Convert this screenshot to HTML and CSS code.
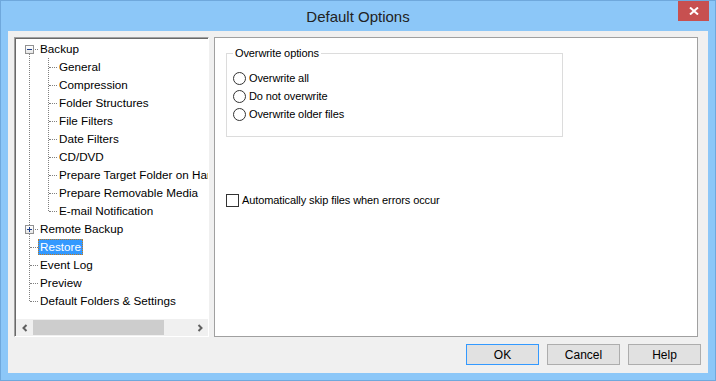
FILE: index.html
```html
<!DOCTYPE html>
<html lang="en">
<head>
  <meta charset="UTF-8">
  <title>Default Options</title>
  <link rel="stylesheet" href="styles.css">
</head>
<body>
  <div class="window">
    <!-- title bar -->
    <div class="titlebar">
      <span class="title">Default Options</span>
      <span class="close">
        <svg width="10" height="8" viewBox="0 0 10 8"><path d="M1 0.5 L9 7.5 M9 0.5 L1 7.5" stroke="#fff" stroke-width="2"/></svg>
      </span>
    </div>

    <div class="client">
      <div class="content">
        <!-- left tree -->
        <div class="treebox">
          <div class="treearea">
            <ul class="tree">
              <li>
                <div class="row has-box">
                  <span class="box"><svg width="9" height="9" viewBox="0 0 9 9"><path d="M2 4.5 H7" stroke="#1c3e8c" stroke-width="1"/></svg></span>
                  <span class="label">Backup</span>
                </div>
                <ul class="sub">
                  <li><div class="row"><span class="label">General</span></div></li>
                  <li><div class="row"><span class="label">Compression</span></div></li>
                  <li><div class="row"><span class="label">Folder Structures</span></div></li>
                  <li><div class="row"><span class="label">File Filters</span></div></li>
                  <li><div class="row"><span class="label">Date Filters</span></div></li>
                  <li><div class="row"><span class="label">CD/DVD</span></div></li>
                  <li><div class="row"><span class="label">Prepare Target Folder on Hard Drive</span></div></li>
                  <li><div class="row"><span class="label">Prepare Removable Media</span></div></li>
                  <li><div class="row"><span class="label">E-mail Notification</span></div></li>
                </ul>
              </li>
              <li>
                <div class="row has-box">
                  <span class="box"><svg width="9" height="9" viewBox="0 0 9 9"><path d="M2 4.5 H7 M4.5 2 V7" stroke="#1c3e8c" stroke-width="1"/></svg></span>
                  <span class="label">Remote Backup</span>
                </div>
              </li>
              <li><div class="row"><span class="label selected">Restore</span></div></li>
              <li><div class="row"><span class="label">Event Log</span></div></li>
              <li><div class="row"><span class="label">Preview</span></div></li>
              <li><div class="row"><span class="label">Default Folders &amp; Settings</span></div></li>
            </ul>
          </div>
          <div class="hscroll">
            <span class="arrow">
              <svg width="8" height="8" viewBox="0 0 8 8"><path d="M5.5 1 L2.5 4 L5.5 7" fill="none" stroke="#606060" stroke-width="2"/></svg>
            </span>
            <div class="track"><div class="thumb"></div></div>
            <span class="arrow">
              <svg width="8" height="8" viewBox="0 0 8 8"><path d="M2.5 1 L5.5 4 L2.5 7" fill="none" stroke="#606060" stroke-width="2"/></svg>
            </span>
          </div>
        </div>

        <!-- right panel -->
        <div class="panel">
          <fieldset class="group">
            <legend>Overwrite options</legend>
            <div class="radio-row"><span class="radio"></span>Overwrite all</div>
            <div class="radio-row"><span class="radio"></span>Do not overwrite</div>
            <div class="radio-row"><span class="radio"></span>Overwrite older files</div>
          </fieldset>
          <div class="check-row"><span class="checkbox"></span>Automatically skip files when errors occur</div>
        </div>
      </div>

      <div class="buttons">
        <button class="btn default">OK</button>
        <button class="btn">Cancel</button>
        <button class="btn">Help</button>
      </div>
    </div>
  </div>
</body>
</html>
```

FILE: styles.css
```css
* {
  box-sizing: border-box;
}
body {
  margin: 0;
  font-family: "Liberation Sans", Arial, sans-serif;
  font-size: 12px;
  color: #000;
}
.window {
  width: 716px;
  height: 381px;
  background: #8cc7f8;
  border: 1px solid #6fa8dc;
  padding: 0 7px 7px 7px;
  display: flex;
  flex-direction: column;
  position: relative;
}
.titlebar {
  height: 30px;
  display: flex;
  align-items: center;
  justify-content: center;
}
.title {
  font-size: 15px;
  color: #222;
  padding-top: 1px;
}
.close {
  position: absolute;
  top: 0;
  right: 6px;
  width: 31px;
  height: 20px;
  background: #c75050;
  display: flex;
  align-items: center;
  justify-content: center;
}
.client {
  flex: 1;
  background: #f0f0f0;
  padding: 6px 7px 8px 6px;
  display: flex;
  flex-direction: column;
}
.content {
  display: flex;
  gap: 5px;
  height: 300px;
}

/* tree */
.treebox {
  width: 195px;
  border-top: 1px solid #a0a0a0;
  border-left: 1px solid #a0a0a0;
  border-right: 1px solid #fff;
  border-bottom: 1px solid #fff;
  display: flex;
  flex-direction: column;
}
.treearea {
  flex: 1;
  background: #fff;
  border-top: 1px solid #696969;
  border-left: 1px solid #696969;
  overflow: hidden;
  padding-top: 1px;
}
.tree, .sub {
  list-style: none;
  margin: 0;
  padding: 0;
  position: relative;
}
.tree::before {
  content: "";
  position: absolute;
  left: 13px;
  top: 9px;
  bottom: 9px;
  border-left: 1px dotted #808080;
}
.sub::before {
  content: "";
  position: absolute;
  left: 32px;
  top: 0;
  bottom: 9px;
  border-left: 1px dotted #808080;
}
.row {
  height: 18px;
  display: flex;
  align-items: center;
  padding-left: 22px;
  position: relative;
  white-space: nowrap;
  font-size: 11.7px;
}
.row::before {
  content: "";
  position: absolute;
  left: 14px;
  width: 8px;
  top: 9px;
  border-top: 1px dotted #808080;
}
.sub .row {
  padding-left: 41px;
}
.sub .row::before {
  left: 33px;
}
.box {
  position: absolute;
  left: 9px;
  top: 5px;
  width: 9px;
  height: 9px;
  border: 1px solid #919191;
  background: linear-gradient(#fff, #e6e6e6);
  z-index: 1;
}
.box svg {
  position: absolute;
  left: -1px;
  top: -1px;
}
.label {
  padding: 0 2px;
  height: 16px;
  line-height: 16px;
}
.label.selected {
  background: #3399ff;
  color: #fff;
  outline: 1px dotted #c47a1b;
  outline-offset: -1px;
}
.hscroll {
  height: 17px;
  background: #f0f0f0;
  border-left: 1px solid #696969;
  display: flex;
  align-items: center;
}
.arrow {
  width: 17px;
  height: 17px;
  display: flex;
  align-items: center;
  justify-content: center;
}
.track {
  flex: 1;
  height: 17px;
  padding: 1px 0;
}
.thumb {
  width: 131px;
  height: 15px;
  background: #cdcdcd;
}

/* right panel */
.panel {
  flex: 1;
  background: #fff;
  border: 1px solid #a0a0a0;
  margin-right: 3px;
  padding: 9px 12px 0 11px;
  font-size: 11px;
  letter-spacing: -0.1px;
}
.group {
  width: 337px;
  height: 90px;
  margin: 0;
  padding: 10px 6px 0 6px;
  border: 1px solid #dcdcdc;
}
.group legend {
  padding: 0 2px;
  color: #000;
}
.radio-row {
  height: 18px;
  display: flex;
  align-items: center;
  gap: 3px;
}
.radio {
  width: 13px;
  height: 13px;
  border: 1px solid #333;
  border-radius: 50%;
  background: #fff;
}
.check-row {
  margin-top: 54px;
  height: 18px;
  display: flex;
  align-items: center;
  gap: 3px;
}
.checkbox {
  width: 13px;
  height: 13px;
  border: 1px solid #333;
  background: #fff;
}

/* buttons */
.buttons {
  margin-top: 7px;
  display: flex;
  justify-content: flex-end;
  gap: 8px;
}
.btn {
  width: 73px;
  height: 21px;
  background: #e1e1e1;
  border: 1px solid #adadad;
  font-family: "Liberation Sans", Arial, sans-serif;
  font-size: 12px;
  color: #000;
  padding: 0;
}
.btn.default {
  border-color: #3399ff;
}
```
